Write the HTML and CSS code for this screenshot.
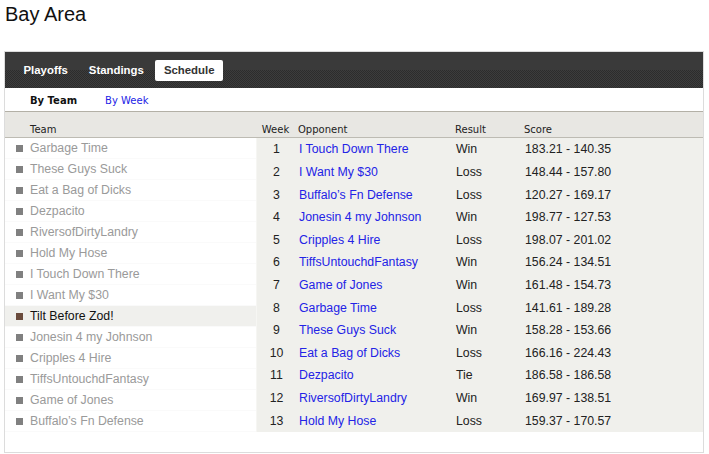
FILE: index.html
```html
<!DOCTYPE html>
<html>
<head>
<meta charset="utf-8">
<link rel="stylesheet" href="styles.css">
</head>
<body>
<h1 class="title">Bay Area</h1>
<div class="panel">
  <div class="tabbar">
    <span class="tab">Playoffs</span>
    <span class="tab">Standings</span>
    <span class="tab active">Schedule</span>
  </div>
  <div class="subtabs">
    <span class="sub active">By Team</span>
    <span class="sub link">By Week</span>
  </div>
  <div class="grid head">
    <div class="h-team">Team</div>
    <div class="cols">
      <span class="c-week">Week</span>
      <span class="c-opp">Opponent</span>
      <span class="c-res">Result</span>
      <span class="c-score">Score</span>
    </div>
  </div>
  <div class="grid body">
    <ul class="teams">
      <li>Garbage Time</li>
      <li>These Guys Suck</li>
      <li>Eat a Bag of Dicks</li>
      <li>Dezpacito</li>
      <li>RiversofDirtyLandry</li>
      <li>Hold My Hose</li>
      <li>I Touch Down There</li>
      <li>I Want My $30</li>
      <li class="sel">Tilt Before Zod!</li>
      <li>Jonesin 4 my Johnson</li>
      <li>Cripples 4 Hire</li>
      <li>TiffsUntouchdFantasy</li>
      <li>Game of Jones</li>
      <li>Buffalo’s Fn Defense</li>
    </ul>
    <div class="sched">
      <div class="cols row"><span class="c-week">1</span><span class="c-opp"><a>I Touch Down There</a></span><span class="c-res">Win</span><span class="c-score">183.21 - 140.35</span></div>
      <div class="cols row"><span class="c-week">2</span><span class="c-opp"><a>I Want My $30</a></span><span class="c-res">Loss</span><span class="c-score">148.44 - 157.80</span></div>
      <div class="cols row"><span class="c-week">3</span><span class="c-opp"><a>Buffalo’s Fn Defense</a></span><span class="c-res">Loss</span><span class="c-score">120.27 - 169.17</span></div>
      <div class="cols row"><span class="c-week">4</span><span class="c-opp"><a>Jonesin 4 my Johnson</a></span><span class="c-res">Win</span><span class="c-score">198.77 - 127.53</span></div>
      <div class="cols row"><span class="c-week">5</span><span class="c-opp"><a>Cripples 4 Hire</a></span><span class="c-res">Loss</span><span class="c-score">198.07 - 201.02</span></div>
      <div class="cols row"><span class="c-week">6</span><span class="c-opp"><a>TiffsUntouchdFantasy</a></span><span class="c-res">Win</span><span class="c-score">156.24 - 134.51</span></div>
      <div class="cols row"><span class="c-week">7</span><span class="c-opp"><a>Game of Jones</a></span><span class="c-res">Win</span><span class="c-score">161.48 - 154.73</span></div>
      <div class="cols row"><span class="c-week">8</span><span class="c-opp"><a>Garbage Time</a></span><span class="c-res">Loss</span><span class="c-score">141.61 - 189.28</span></div>
      <div class="cols row"><span class="c-week">9</span><span class="c-opp"><a>These Guys Suck</a></span><span class="c-res">Win</span><span class="c-score">158.28 - 153.66</span></div>
      <div class="cols row"><span class="c-week">10</span><span class="c-opp"><a>Eat a Bag of Dicks</a></span><span class="c-res">Loss</span><span class="c-score">166.16 - 224.43</span></div>
      <div class="cols row"><span class="c-week">11</span><span class="c-opp"><a>Dezpacito</a></span><span class="c-res">Tie</span><span class="c-score">186.58 - 186.58</span></div>
      <div class="cols row"><span class="c-week">12</span><span class="c-opp"><a>RiversofDirtyLandry</a></span><span class="c-res">Win</span><span class="c-score">169.97 - 138.51</span></div>
      <div class="cols row"><span class="c-week">13</span><span class="c-opp"><a>Hold My Hose</a></span><span class="c-res">Loss</span><span class="c-score">159.37 - 170.57</span></div>
    </div>
  </div>
</div>
</body>
</html>
```

FILE: styles.css
```css
* { box-sizing: border-box; }
body {
  margin: 0;
  font-family: "Liberation Sans", Arial, sans-serif;
  font-size: 12.3px;
  color: #222;
  background: #fff;
}
.title {
  margin: 0;
  padding: 2px 0 0 5px;
  font-size: 20px;
  font-weight: normal;
  line-height: 24px;
  color: #111;
}
.panel {
  margin: 25px 5px 0 4px;
  border: 1px solid #dcdcdc;
  padding-bottom: 20px;
}
.tabbar {
  height: 36px;
  display: flex;
  align-items: center;
  padding-left: 8px;
  background:
    linear-gradient(#3a3a3a, #3a3a3a) top / 100% 50% no-repeat,
    repeating-conic-gradient(#2c2c2c 0 25%, #3c3c3c 0 50%) 0 0 / 2px 2px;
}
.tab {
  font-weight: bold;
  font-size: 11.4px;
  color: #fff;
  padding: 0 10.5px;
  height: 21px;
  line-height: 21px;
  border-radius: 2px;
  margin-top: 1px;
}
.tab.active {
  background: #fff;
  color: #333;
  padding: 0 8.5px;
  margin-left: 1px;
}
.subtabs {
  height: 24px;
  display: flex;
  align-items: center;
  border-bottom: 1px solid #b3b0a6;
  font-family: "DejaVu Sans", Verdana, sans-serif;
  font-size: 10px;
  padding-left: 25px;
  padding-top: 2px;
}
.sub { margin-right: 28px; }
.sub.active { font-weight: bold; color: #111; }
.sub.link { color: #2323e6; }
.grid {
  display: grid;
  grid-template-columns: 251px 1fr;
}
.head {
  height: 26px;
  background: #e8e7e3;
  border-bottom: 1px solid #bdbbb3;
  font-family: "DejaVu Sans", Verdana, sans-serif;
  font-size: 10px;
  color: #222;
  align-items: end;
  padding-bottom: 2px;
}
.h-team { padding-left: 25px; }
.cols {
  display: grid;
  grid-template-columns: 39px 160px 69px 1fr;
}
.c-week { text-align: center; }
.c-opp { padding-left: 3px; }
.teams {
  list-style: none;
  margin: 0;
  padding: 0;
}
.teams li {
  height: 21px;
  line-height: 21px;
  display: flex;
  align-items: center;
  padding-left: 11px;
  padding-top: 1px;
  color: #9a9a9a;
  border-bottom: 1px solid #fafafa;
}
.teams li::before {
  content: "";
  width: 7px;
  height: 7px;
  background: #808080;
  margin-right: 7px;
}
.teams li.sel {
  background: #f0f0ed;
  color: #111;
}
.teams li.sel::before { background: #6a4b3c; }
.sched {
  background: #f0f0ec;
  height: 294px;
  display: grid;
  grid-template-rows: repeat(13, 1fr);
  border-left: 1px solid #f6f6f3;
}
.row {
  align-items: center;
  color: #222;
}
.row a { color: #2323e6; text-decoration: none; }
```
